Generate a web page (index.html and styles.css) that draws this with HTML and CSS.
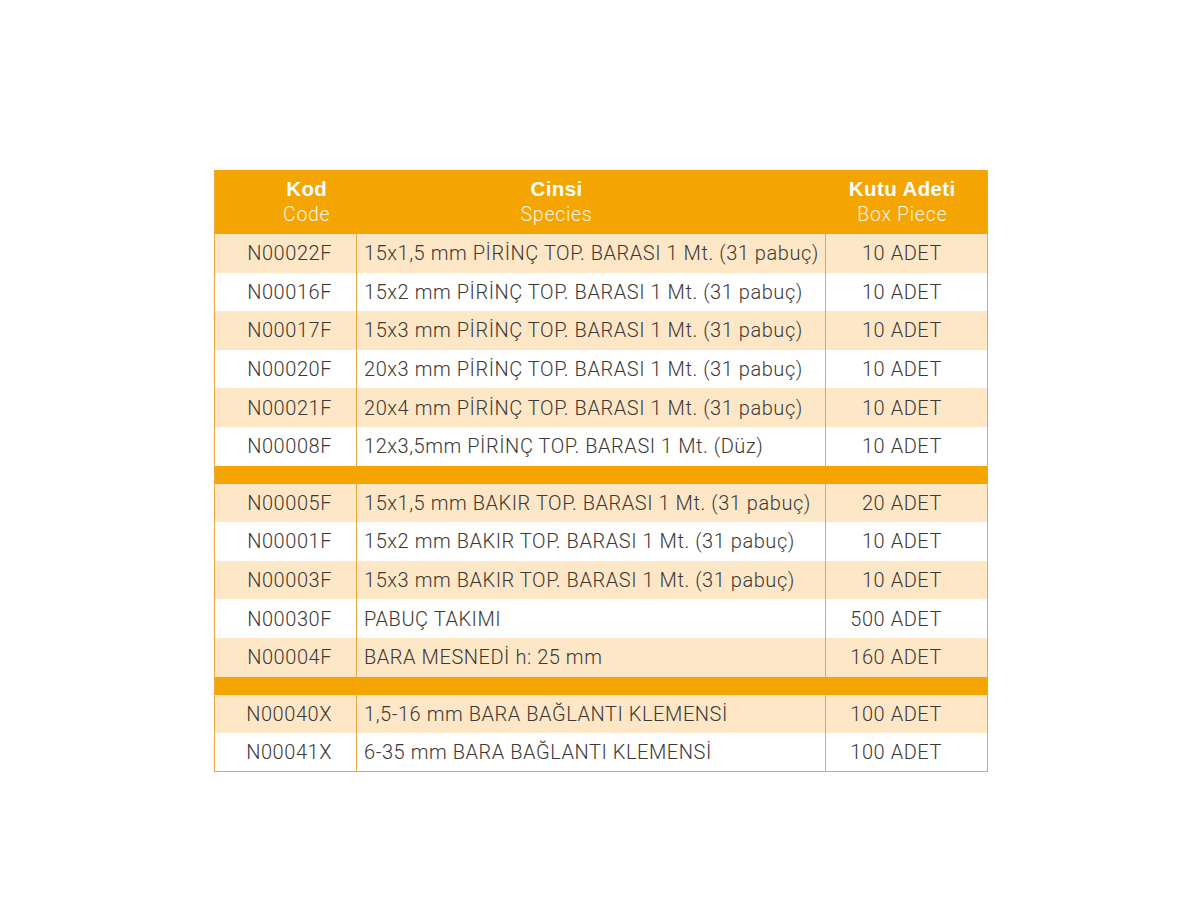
FILE: index.html
```html
<!DOCTYPE html>
<html lang="tr">
<head>
<meta charset="utf-8">
<title>Bara Tablosu</title>
<link rel="stylesheet" href="styles.css">
</head>
<body>
<div class="page">
  <table class="product-table">
    <colgroup>
      <col class="c-code">
      <col class="c-species">
      <col class="c-box">
    </colgroup>
    <thead>
      <tr class="head-row">
        <th class="h-code"><span class="h-tr">Kod</span><span class="h-en">Code</span></th>
        <th class="h-species"><span class="h-tr">Cinsi</span><span class="h-en">Species</span></th>
        <th class="h-box"><span class="h-tr">Kutu Adeti</span><span class="h-en">Box Piece</span></th>
      </tr>
    </thead>
    <tbody>
      <tr class="row alt"><td class="code">N00022F</td><td class="species">15x1,5 mm PİRİNÇ TOP. BARASI 1 Mt. (31 pabuç)</td><td class="box">10 ADET</td></tr>
      <tr class="row"><td class="code">N00016F</td><td class="species">15x2 mm PİRİNÇ TOP. BARASI 1 Mt. (31 pabuç)</td><td class="box">10 ADET</td></tr>
      <tr class="row alt"><td class="code">N00017F</td><td class="species">15x3 mm PİRİNÇ TOP. BARASI 1 Mt. (31 pabuç)</td><td class="box">10 ADET</td></tr>
      <tr class="row"><td class="code">N00020F</td><td class="species">20x3 mm PİRİNÇ TOP. BARASI 1 Mt. (31 pabuç)</td><td class="box">10 ADET</td></tr>
      <tr class="row alt"><td class="code">N00021F</td><td class="species">20x4 mm PİRİNÇ TOP. BARASI 1 Mt. (31 pabuç)</td><td class="box">10 ADET</td></tr>
      <tr class="row"><td class="code">N00008F</td><td class="species">12x3,5mm PİRİNÇ TOP. BARASI 1 Mt. (Düz)</td><td class="box">10 ADET</td></tr>
      <tr class="sep"><td colspan="3"></td></tr>
      <tr class="row alt"><td class="code">N00005F</td><td class="species">15x1,5 mm BAKIR TOP. BARASI 1 Mt. (31 pabuç)</td><td class="box">20 ADET</td></tr>
      <tr class="row"><td class="code">N00001F</td><td class="species">15x2 mm BAKIR TOP. BARASI 1 Mt. (31 pabuç)</td><td class="box">10 ADET</td></tr>
      <tr class="row alt"><td class="code">N00003F</td><td class="species">15x3 mm BAKIR TOP. BARASI 1 Mt. (31 pabuç)</td><td class="box">10 ADET</td></tr>
      <tr class="row"><td class="code">N00030F</td><td class="species">PABUÇ TAKIMI</td><td class="box">500 ADET</td></tr>
      <tr class="row alt"><td class="code">N00004F</td><td class="species">BARA MESNEDİ h: 25 mm</td><td class="box">160 ADET</td></tr>
      <tr class="sep"><td colspan="3"></td></tr>
      <tr class="row alt"><td class="code">N00040X</td><td class="species">1,5-16 mm BARA BAĞLANTI KLEMENSİ</td><td class="box">100 ADET</td></tr>
      <tr class="row"><td class="code">N00041X</td><td class="species">6-35 mm BARA BAĞLANTI KLEMENSİ</td><td class="box">100 ADET</td></tr>
    </tbody>
  </table>
</div>
</body>
</html>
```

FILE: styles.css
```css
* { box-sizing: border-box; }

html, body {
  margin: 0;
  padding: 0;
  background: #ffffff;
}

.page {
  padding: 170px 0 0 214px;
}

.product-table {
  width: 773px;
  table-layout: fixed;
  border-collapse: collapse;
  font-family: Roboto, "Liberation Sans", sans-serif;
  color: #3d3834;
  border-left: 1px solid #e9a93f;
  border-right: 1px solid #e9a93f;
  border-bottom: 1px solid #e9a93f;
}

.c-code { width: 142px; }
.c-species { width: 469px; }
.c-box { width: 162px; }

.head-row {
  height: 64px;
  background: #f5a502;
}

.head-row th {
  padding: 0;
  text-align: center;
  vertical-align: top;
  color: #ffffff;
  font-weight: normal;
}

.h-tr {
  display: block;
  font-family: "Liberation Sans", Arial, sans-serif;
  font-weight: bold;
  font-size: 20.5px;
  letter-spacing: 0.4px;
  line-height: 22px;
  margin-top: 8px;
}

.h-en {
  display: block;
  font-family: Roboto, "Liberation Sans", sans-serif;
  font-weight: 300;
  font-size: 19.5px;
  letter-spacing: 0.7px;
  line-height: 26px;
  margin-top: 2px;
  color: #fff4e2;
}

.h-code { padding-left: 42px !important; }
.h-species { padding-right: 69px !important; }
.h-box { padding-right: 8px !important; }

.row {
  height: 38.6px;
  background: #ffffff;
}

.row.alt {
  background: #fde7c7;
}

.row td {
  padding: 0;
  font-size: 20px;
  font-weight: 300;
  letter-spacing: 0.55px;
  line-height: 20px;
  vertical-align: middle;
  white-space: nowrap;
}

.row td + td {
  border-left: 1px solid #e9a93f;
}

.code {
  text-align: right;
  padding-right: 24px !important;
}

.species {
  text-align: left;
  padding-left: 7px !important;
}

.box {
  text-align: right;
  padding-right: 45px !important;
}

.sep {
  height: 18px;
  background: #f5a502;
}

.sep td {
  padding: 0;
}
```
